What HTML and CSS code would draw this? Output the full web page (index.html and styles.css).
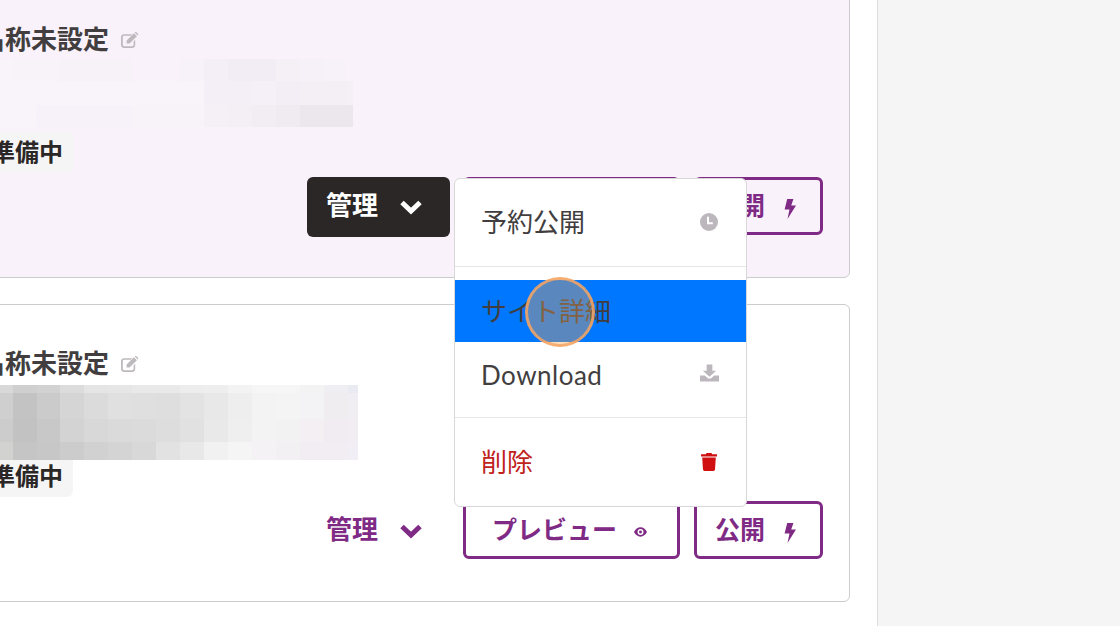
FILE: index.html
```html
<!DOCTYPE html>
<html lang="ja">
<head>
    <meta charset="UTF-8">
    <meta name="viewport" content="width=device-width, initial-scale=1.0">
    <title>サイト一覧</title>
    <link rel="stylesheet" href="styles.css">
</head>
<body>
    <div class="page">
        <main class="site-list">
            <section class="site-card site-card-active">
                <h2 class="site-title">名称未設定
                    <svg class="edit-icon" viewBox="0 0 18 16"><path d="M3 2.200h8.200L9.600 3.800H3.200c-.8 0-1.400.6-1.400 1.400v7.600c0 .8.6 1.400 1.400 1.400h8c.8 0 1.400-.6 1.400-1.400V9.400l1.600-1.600v5.200c0 1.600-1.300 2.900-2.900 2.900H3c-1.600 0-3-1.300-3-2.900V5.100C0 3.500 1.400 2.200 3 2.200z"/><path d="M5.600 8.600 12.900 1.300l3 3-7.300 7.300h-3zM13.800.4c.5-.5 1.300-.5 1.800 0l1.200 1.200c.5.5.5 1.300 0 1.800l-.1.1-3-3z"/></svg>
                </h2>
                <div class="mosaic mosaic-light"><div></div><div></div><div></div></div>
                <span class="status-badge">準備中</span>
                <div class="card-actions">
                    <button class="btn-manage btn-manage-open">管理
                        <svg class="chevron" viewBox="0 0 24 16"><path d="M3 3.500 12 12l9-8.500"/></svg>
                    </button>
                    <button class="btn-outline btn-preview">プレビュー
                        <svg class="eye-icon" viewBox="0 0 14 10"><path fill-rule="evenodd" d="M7 0c3 0 5.400 2 7 5-1.600 3-4 5-7 5S1.600 8 0 5c1.600-3 4-5 7-5zm0 1.800a3.200 3.200 0 1 0 0 6.400 3.200 3.200 0 0 0 0-6.400zM7 3.400a1.600 1.600 0 1 1 0 3.200 1.600 1.600 0 0 1 0-3.200z"/></svg>
                    </button>
                    <button class="btn-outline btn-publish">公開
                        <svg class="bolt-icon" viewBox="0 0 12 20"><path d="M3.200 0h6.200L7.200 6.500H12L3.500 20l2-9.500H.6z"/></svg>
                    </button>
                </div>
            </section>

            <section class="site-card">
                <h2 class="site-title">名称未設定
                    <svg class="edit-icon" viewBox="0 0 18 16"><path d="M3 2.200h8.200L9.600 3.800H3.200c-.8 0-1.400.6-1.400 1.400v7.600c0 .8.6 1.400 1.400 1.400h8c.8 0 1.400-.6 1.400-1.400V9.400l1.600-1.600v5.200c0 1.600-1.300 2.900-2.900 2.900H3c-1.600 0-3-1.300-3-2.900V5.100C0 3.500 1.400 2.200 3 2.200z"/><path d="M5.600 8.600 12.900 1.300l3 3-7.300 7.300h-3zM13.800.4c.5-.5 1.300-.5 1.800 0l1.200 1.200c.5.5.5 1.300 0 1.800l-.1.1-3-3z"/></svg>
                </h2>
                <div class="mosaic mosaic-dark"><div></div><div></div><div></div><div></div></div>
                <span class="status-badge">準備中</span>
                <div class="card-actions">
                    <button class="btn-manage">管理
                        <svg class="chevron" viewBox="0 0 24 16"><path d="M3 3.500 12 12l9-8.500"/></svg>
                    </button>
                    <button class="btn-outline btn-preview">プレビュー
                        <svg class="eye-icon" viewBox="0 0 14 10"><path fill-rule="evenodd" d="M7 0c3 0 5.400 2 7 5-1.600 3-4 5-7 5S1.600 8 0 5c1.600-3 4-5 7-5zm0 1.800a3.200 3.200 0 1 0 0 6.400 3.200 3.200 0 0 0 0-6.400zM7 3.400a1.600 1.600 0 1 1 0 3.200 1.600 1.600 0 0 1 0-3.200z"/></svg>
                    </button>
                    <button class="btn-outline btn-publish">公開
                        <svg class="bolt-icon" viewBox="0 0 12 20"><path d="M3.200 0h6.200L7.200 6.500H12L3.500 20l2-9.500H.6z"/></svg>
                    </button>
                </div>
            </section>

            <!-- The open dropdown -->
            <div class="manage-menu">
                <div class="menu-section">
                    <a class="menu-item">予約公開
                        <svg class="menu-icon" viewBox="0 0 18 18"><circle cx="9" cy="9" r="9"/><path class="clock-hands" d="M8 3.800v6.400h4.800"/></svg>
                    </a>
                </div>
                <div class="menu-section">
                    <a class="menu-item menu-item-selected">サイト詳細</a>
                    <a class="menu-item menu-item-latin">Download
                        <svg class="menu-icon download-icon" viewBox="0 0 20 18"><path d="M7 0h6v6.500h4L10 13 3 6.500h4z"/><path d="M0 11.500h5l3.500 3.300h3l3.500-3.300h5V18H0z"/></svg>
                    </a>
                </div>
                <div class="menu-section">
                    <a class="menu-item menu-item-danger">削除
                        <svg class="menu-icon trash-icon" viewBox="0 0 16 18"><path d="M5.500 0h5l.6 1.300H16v2.200H0V1.300h4.900z"/><path d="M1.200 4.600h13.600l-.8 12c-.1.800-.7 1.400-1.500 1.400H3.500c-.8 0-1.400-.6-1.500-1.400z"/></svg>
                    </a>
                </div>
            </div>
        </main>
        <aside class="side-panel"></aside>
    </div>

    <!-- Click marker from the recording -->
    <div class="click-marker"></div>
</body>
</html>
```

FILE: styles.css
```css
html, body {
    margin: 0;
    height: 100%;
    overflow: hidden;
}
body {
    font-family: Lato, "Noto Sans CJK JP", sans-serif;
    color: #423e40;
    background-color: #fff;
}
.page {
    display: flex;
    height: 626px;
    overflow: hidden;
}
/* the list is scrolled past the left and top of the window */
.site-list {
    position: relative;
    flex: 0 0 938px;
    box-sizing: border-box;
    margin: -20px 0 0 -60px;
    padding-right: 27px;
    border-right: 1px solid #ddd;
    display: flex;
    flex-direction: column;
    gap: 26px;
}
.side-panel {
    flex: 1;
    background-color: #f5f5f5;
}
.site-card {
    position: relative;
    flex: none;
    box-sizing: border-box;
    height: 298px;
    padding: 39px 26px 0 39px;
    background-color: #fff;
    border: 1px solid #ccc;
    border-radius: 6px;
}
.site-card-active {
    background-color: #f9f2fa;
}
.site-title {
    display: flex;
    align-items: center;
    gap: 12px;
    margin: 0 0 73px -1px;
    font-size: 26px;
    line-height: 38px;
    font-weight: 700;
    color: #423e40;
}
.edit-icon {
    width: 18px;
    height: 16px;
    margin-top: 2px;
    fill: #bdb9bd;
}
.status-badge {
    display: block;
    width: max-content;
    height: 42px;
    padding: 0 10px 0 11px;
    font-size: 24px;
    line-height: 42px;
    font-weight: 700;
    color: #2b2727;
    background-color: #f5f5f5;
    border-radius: 6px;
}
.card-actions {
    display: flex;
    justify-content: flex-end;
    align-items: flex-start;
    margin-top: 4px;
}
button {
    font-family: inherit;
    font-weight: 700;
    color: #7f2a85;
    background: none;
    border: none;
    cursor: pointer;
    padding: 0;
    box-sizing: border-box;
    display: flex;
    align-items: center;
}
.btn-manage {
    width: 143px;
    height: 60px;
    padding: 0 27px 8px 19px;
    font-size: 26px;
    justify-content: space-between;
    border-radius: 6px;
    margin-right: 13px;
}
.btn-manage-open {
    color: #fff;
    background-color: #2b2727;
}
.chevron {
    width: 24px;
    height: 16px;
    margin-top: 8px;
    fill: none;
    stroke: currentColor;
    stroke-width: 5;
}
.btn-outline {
    height: 58px;
    padding-bottom: 4px;
    font-size: 25px;
    border: 3px solid #7f2a85;
    border-radius: 6px;
    background-color: transparent;
}
.btn-preview {
    width: 217px;
    padding-left: 26px;
    margin-right: 14px;
}
.btn-publish {
    width: 129px;
    padding-left: 18px;
}
.eye-icon {
    width: 13px;
    height: 10px;
    margin-left: 17px;
    margin-top: 8px;
    fill: #7f2a85;
}
.bolt-icon {
    width: 12px;
    height: 20px;
    margin-left: 19px;
    margin-top: 9px;
    fill: #7f2a85;
}
/* pixelated blur laid over the card text */
.mosaic {
    position: absolute;
    left: 59px;
    display: grid;
}
.mosaic-light {
    top: 78px;
    width: 353px;
    grid-template-rows: 22px 24px 22px;
}
.mosaic-light div:nth-child(1) {
    background: linear-gradient(90deg, #f9f3fa 0 13px, #f8f2f9 13px 60px, #f7f1f8 60px 132px, #f9f2fa 132px 180px, #f7f2f9 180px 204px, #f4eff6 204px 228px, #f2edf4 228px 276px, #f4f0f6 276px 300px, #f6f1f8 300px 324px, #f7f2f9 324px 346px, transparent 346px);
}
.mosaic-light div:nth-child(2) {
    background: linear-gradient(90deg, #f9f3fa 0 204px, #f4eff6 204px 252px, #f5f0f7 252px 276px, #f3eef5 276px 300px, #f4eff5 300px 348px, #f5f0f6 348px);
}
.mosaic-light div:nth-child(3) {
    background: linear-gradient(90deg, #f9f3fa 0 36px, #f7f2f9 36px 132px, #f8f2f9 132px 204px, #f5f0f6 204px 228px, #f4eff5 228px 252px, #f2edf3 252px 276px, #efebf0 276px 300px, #ece7ed 300px);
}
.mosaic-dark {
    top: 80px;
    width: 358px;
    grid-template-rows: 8px 26px 23px 18px;
}
.mosaic-dark div:nth-child(1) {
    background: linear-gradient(90deg, #d8d8d8 0 13px, #cfcfcf 13px 37px, #d2d2d2 37px 60px, #dcdcdc 60px 84px, #e5e5e5 84px 108px, #e6e6e6 108px 132px, #e9e9e9 132px 180px, #ededed 180px 204px, #eeeeee 204px 228px, #f3f3f3 228px 252px, #f6f6f6 252px 276px, #f7f6f6 276px 300px, #f3f3f4 300px 324px, #eeeef3 324px 348px, #eaeaf2 348px);
}
.mosaic-dark div:nth-child(2) {
    background: linear-gradient(90deg, #cfcfcf 0 13px, #c3c3c3 13px 37px, #cbcbcb 37px 60px, #d5d5d5 60px 84px, #dbdbdb 84px 108px, #e0e0e0 108px 132px, #dfdfdf 132px 156px, #dedede 156px 180px, #e3e3e3 180px 204px, #e8e8e8 204px 228px, #eeeeee 228px 252px, #f3f3f3 252px 276px, #f4f4f4 276px 300px, #f3f3f5 300px 324px, #f0edf1 324px 348px, #f0eef2 348px);
}
.mosaic-dark div:nth-child(3) {
    background: linear-gradient(90deg, #cccccc 0 13px, #c2c2c2 13px 37px, #c8c8c8 37px 60px, #d3d3d3 60px 84px, #d8d8d8 84px 108px, #dadada 108px 132px, #dbdbdb 132px 156px, #dddddd 156px 180px, #e1e1e1 180px 204px, #e9e9e9 204px 228px, #efefef 228px 252px, #f3f3f3 252px 276px, #f3f2f3 276px 300px, #f3eff2 300px 324px, #f0ecf1 324px 348px, #f1edf3 348px);
}
.mosaic-dark div:nth-child(4) {
    background: linear-gradient(90deg, #d2d2d0 0 13px, #c5c5c5 13px 37px, #c7c7c7 37px 60px, #cdcccc 60px 84px, #d1d1d1 84px 108px, #d4d4d4 108px 132px, #d8d8d8 132px 156px, #e2e2e2 156px 180px, #e8e8e8 180px 204px, #f1f1f1 204px 228px, #f6f5f5 228px 252px, #f4f2f5 252px 276px, #f3f0f4 276px 300px, #f1edf3 300px 348px, #f2eef5 348px);
}
.manage-menu {
    position: absolute;
    top: 198px;
    left: 514px;
    width: 293px;
    box-sizing: border-box;
    background-color: #fff;
    border: 1px solid #d8d8d8;
    border-radius: 6px;
    overflow: hidden;
}
.menu-section {
    padding: 13px 0;
    border-bottom: 1px solid #e6e6e6;
}
.menu-section:first-child {
    padding-top: 12px;
}
.menu-section:last-child {
    border-bottom: none;
}
.menu-item {
    display: flex;
    align-items: center;
    justify-content: space-between;
    box-sizing: border-box;
    height: 62px;
    padding: 0 28px 4px 26px;
    font-size: 26px;
    color: #423e40;
}
.menu-item-selected {
    background-color: #0077ff;
}
.menu-item-danger {
    color: #c0221c;
}
.menu-item-latin {
    padding-top: 4px;
    padding-bottom: 0;
    letter-spacing: 0.5px;
}
.menu-icon {
    width: 18px;
    height: 18px;
    margin-top: 4px;
    fill: #bcb7bc;
}
.clock-hands {
    fill: none;
    stroke: #fff;
    stroke-width: 2;
}
.download-icon {
    width: 19px;
    margin: 0 -1px 4px 0;
}
.trash-icon {
    width: 16px;
    margin-right: 1px;
    fill: #d01010;
}
.click-marker {
    position: absolute;
    left: 525px;
    top: 277px;
    width: 70px;
    height: 70px;
    box-sizing: border-box;
    border: 3px solid rgba(245, 165, 100, 0.85);
    border-radius: 50%;
    background-color: rgba(255, 165, 70, 0.35);
}
```
